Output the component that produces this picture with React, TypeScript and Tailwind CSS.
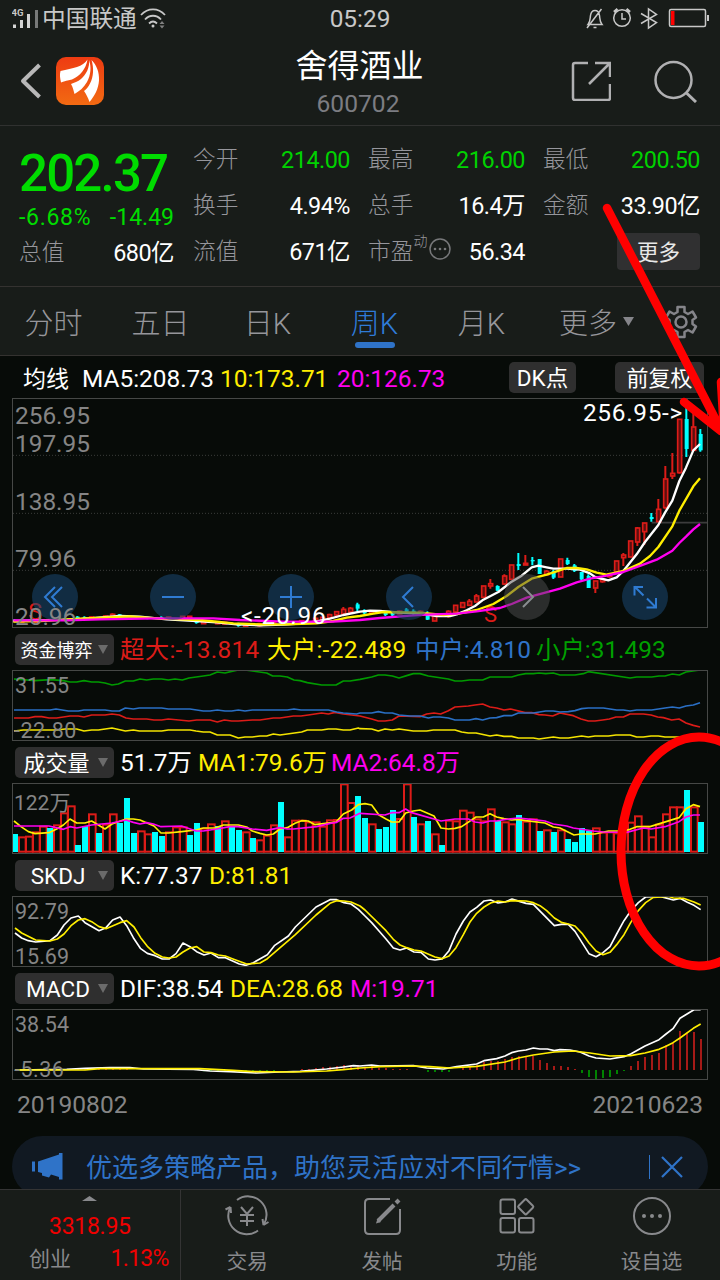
import type { ReactNode } from "react";
import clsx from "clsx";

// Chart geometry is kept in device units (3 per css pixel).
// R() shifts the points of the right half of the screen.
type Pt = [number, number];
const R = (pts: Pt[]): Pt[] => pts.map(([x, y]) => [x + 1080, y]);

const barX = (i: number) => 45 + 21 * i;

const volumes =
    "c612 r620 r618 r605 r588 c594 r584 r548 r527 c645 c588 r551 c609 r582 r551 c579 c504 c609 r602 r611 c606 c618 r605 r590 r590 c615 c579 r594 r581 c588 r572 c590 c600 r605 c624 r629 r615 r584 c516 r620 r570 r570 r575 r575 r588 r569 r568 r461 r517 c498 c564 r581 c597 c591 c540 r565 r461 c561 r581 c573 r611 c645 r570 r572 r540 r546 r566 r572 r536 c573 r575 r581 c555 r573 r566 c603 r599 c606 r599 c627 c636 c594 c602 r593 r606 r605 r608 r600 r576 r557 r588 r620 r582 r551 r530 r530 c480 r530 c576".split(" ");

// [index, color, high, bodyTop, bodyBottom, low]
const candles: [number, "c" | "r", number, number, number, number][] = [
    [0, "c", 790, 793, 797, 798], [1, "r", 792, 794, 799, 800], [3, "r", 792, 794, 799, 800],
    [9, "c", 780, 782, 787, 788], [10, "c", 781, 783, 787, 789], [11, "r", 781, 783, 787, 788],
    [13, "r", 778, 780, 785, 786], [14, "r", 772, 775, 782, 784], [15, "c", 774, 775, 780, 782],
    [19, "c", 782, 784, 788, 790], [21, "c", 780, 783, 789, 790], [22, "r", 781, 783, 789, 790],
    [24, "r", 780, 781, 787, 788], [25, "r", 780, 781, 787, 788], [26, "c", 793, 796, 801, 803],
    [27, "r", 793, 795, 803, 804], [29, "r", 795, 797, 803, 805], [30, "r", 797, 799, 804, 806],
    [32, "c", 800, 804, 810, 812], [33, "r", 802, 806, 811, 812], [35, "r", 800, 803, 809, 812],
    [37, "r", 795, 798, 804, 806], [39, "c", 793, 796, 800, 804], [41, "r", 792, 794, 801, 804],
    [43, "r", 785, 787, 797, 800], [44, "r", 782, 784, 794, 797], [45, "r", 773, 776, 785, 789],
    [46, "r", 765, 767, 777, 782], [47, "r", 753, 760, 774, 777], [48, "r", 753, 757, 768, 770],
    [49, "c", 740, 745, 758, 766], [50, "c", 760, 763, 772, 775], [51, "r", 762, 766, 772, 775],
    [53, "c", 766, 770, 777, 780], [54, "c", 768, 771, 778, 780], [55, "r", 762, 765, 774, 778],
    [56, "c", 756, 760, 767, 772], [57, "c", 760, 764, 770, 776], [58, "r", 763, 766, 774, 780],
    [59, "c", 766, 771, 791, 792], [60, "r", 775, 779, 795, 795], [61, "c", 774, 776, 779, 782],
    [62, "r", 763, 766, 778, 785], [63, "r", 747, 748, 768, 768], [64, "r", 738, 740, 754, 755],
    [65, "r", 729, 736, 748, 750], [66, "r", 714, 720, 738, 738], [67, "r", 690, 690, 724, 725],
    [68, "r", 669, 683, 690, 698], [69, "c", 688, 690, 704, 705], [70, "r", 655, 660, 684, 686],
    [71, "r", 627, 627, 670, 672], [72, "c", 591, 624, 630, 642], [73, "r", 597, 622, 627, 627],
    [74, "c", 603, 612, 616, 628], [75, "c", 609, 609, 654, 654], [76, "r", 642, 646, 656, 660],
    [77, "c", 642, 645, 665, 669], [78, "r", 609, 609, 663, 663], [79, "c", 605, 612, 624, 627],
    [80, "c", 624, 628, 645, 648], [81, "c", 648, 648, 670, 672], [82, "c", 655, 660, 696, 696],
    [83, "r", 675, 675, 696, 711], [84, "r", 666, 670, 677, 680], [85, "r", 650, 654, 662, 665],
    [86, "r", 615, 615, 648, 650], [87, "r", 591, 597, 605, 630], [88, "r", 555, 555, 603, 603],
    [89, "r", 513, 516, 558, 570], [90, "r", 501, 501, 527, 567], [91, "c", 471, 483, 489, 497],
    [92, "r", 429, 460, 497, 497], [93, "r", 330, 369, 455, 460], [94, "r", 291, 352, 360, 369],
    [95, "r", 190, 190, 350, 353], [96, "c", 126, 189, 279, 303], [97, "r", 165, 213, 283, 285],
    [98, "c", 219, 234, 283, 287],
];

const ma5: Pt[] = [
    [40, 795], [230, 790], [360, 780], [420, 782], [500, 790], [590, 795], [650, 799], [710, 805], [780, 808], [850, 806], [900, 803], [950, 796], [990, 788], [1030, 777], [1080, 767],
    ...R([[30, 764], [60, 765], [120, 770], [180, 772], [230, 780], [270, 780], [290, 775], [320, 763], [345, 750], [370, 731], [415, 708], [455, 677], [485, 659], [515, 634], [535, 629], [560, 634], [580, 638], [620, 638], [660, 641], [690, 652], [705, 663], [745, 673], [770, 664], [790, 645], [830, 595], [855, 558], [895, 507], [915, 470], [937, 434], [958, 375], [978, 335], [1000, 283], [1020, 264]]),
];
const ma10: Pt[] = [
    [40, 797], [120, 795], [240, 788], [390, 781], [470, 787], [600, 792], [700, 802], [780, 805], [860, 805], [950, 802], [1000, 795], [1040, 785], [1080, 780],
    ...R([[40, 773], [70, 768], [130, 769], [180, 770], [250, 777], [300, 772], [350, 762], [400, 744], [440, 720], [475, 693], [515, 668], [560, 656], [590, 646], [620, 636], [650, 636], [680, 640], [710, 650], [740, 656], [790, 645], [840, 623], [870, 600], [895, 573], [937, 511], [958, 464], [1000, 391], [1020, 367]]),
];
const ma20: Pt[] = [
    [40, 793], [200, 793], [300, 790], [480, 787], [640, 787], [720, 792], [850, 797], [1000, 797], [1080, 792],
    ...R([[60, 786], [150, 779], [200, 776], [290, 773], [350, 766], [420, 756], [455, 744], [500, 725], [600, 698], [650, 679], [690, 668], [740, 659], [790, 648], [850, 626], [890, 611], [937, 584], [958, 561], [978, 542], [1000, 520], [1020, 504]]),
];

const flowSmall: Pt[] = [
    [42, 147], [105, 152], [150, 149], [190, 152], [210, 156], [230, 156], [252, 152], [275, 156], [295, 156], [315, 159], [336, 165], [355, 162], [376, 153], [400, 153], [420, 147], [440, 150], [460, 147], [485, 147], [505, 150], [525, 147], [547, 150], [567, 144], [610, 138], [630, 135], [652, 126], [675, 129], [695, 124], [715, 120], [735, 120], [800, 129], [818, 138], [840, 138], [862, 141], [882, 150], [900, 152], [922, 158], [965, 165], [1008, 165], [1030, 153], [1050, 153], [1080, 148],
    ...R([[35, 141], [55, 135], [75, 135], [97, 138], [117, 144], [140, 137], [160, 131], [180, 131], [205, 138], [265, 147], [285, 153], [305, 153], [328, 150], [368, 150], [390, 141], [455, 141], [475, 135], [497, 131], [520, 131], [537, 129], [557, 131], [580, 129], [600, 135], [645, 135], [670, 131], [685, 125], [810, 144], [830, 141], [875, 141], [897, 138], [915, 138], [937, 132], [958, 135], [978, 126], [1020, 120]]),
];
const flowMid: Pt[] = [
    [42, 240], [150, 240], [168, 237], [205, 243], [235, 243], [252, 240], [315, 240], [336, 243], [358, 243], [376, 234], [400, 237], [418, 234], [485, 234], [505, 237], [570, 237], [610, 243], [630, 243], [652, 240], [675, 243], [695, 243], [715, 240], [735, 243], [757, 240], [862, 240], [882, 237], [903, 240], [985, 240], [1010, 246], [1030, 249], [1070, 252],
    ...R([[0, 249], [35, 249], [55, 245], [75, 249], [97, 249], [117, 255], [150, 258], [180, 258], [205, 264], [220, 261], [240, 261], [265, 264], [285, 270], [328, 270], [348, 266], [368, 270], [390, 264], [410, 263], [432, 257], [455, 257], [475, 249], [520, 249], [557, 243], [580, 243], [600, 246], [625, 245], [645, 242], [665, 236], [685, 234], [730, 234], [770, 240], [790, 240], [810, 243], [830, 240], [875, 240], [915, 234], [937, 231], [958, 234], [978, 228], [1000, 225], [1020, 218]]),
];
const flowHuge: Pt[] = [
    [42, 264], [85, 264], [105, 260], [125, 260], [147, 264], [170, 264], [210, 258], [235, 258], [252, 261], [275, 255], [315, 255], [336, 252], [358, 255], [378, 264], [400, 267], [440, 267], [462, 270], [485, 270], [505, 267], [567, 273], [590, 270], [630, 270], [652, 276], [673, 270], [695, 273], [715, 273], [757, 270], [780, 270], [820, 264], [840, 264], [880, 258], [903, 258], [925, 255], [965, 249], [985, 252], [1005, 247], [1030, 252], [1080, 258],
    ...R([[35, 267], [55, 273], [75, 273], [97, 270], [117, 258], [180, 260], [200, 252], [222, 249], [242, 252], [265, 242], [285, 231], [325, 228], [345, 225], [368, 222], [390, 231], [410, 234], [432, 240], [452, 237], [495, 248], [515, 248], [537, 254], [555, 255], [578, 258], [600, 249], [640, 257], [663, 267], [685, 273], [705, 273], [728, 270], [748, 267], [768, 261], [790, 261], [810, 252], [850, 252], [873, 255], [893, 261], [910, 263], [935, 270], [957, 267], [978, 279], [1000, 286], [1020, 291]]),
];
const flowBig: Pt[] = [
    [42, 303], [70, 300], [170, 300], [195, 297], [230, 297], [252, 303], [275, 300], [295, 300], [336, 294], [376, 303], [400, 300], [418, 303], [485, 303], [505, 300], [570, 300], [588, 303], [610, 306], [630, 306], [652, 315], [690, 315], [715, 324], [735, 321], [757, 321], [780, 318], [800, 318], [820, 312], [840, 315], [905, 306], [922, 300], [965, 300], [985, 297], [1008, 297], [1030, 300], [1050, 300], [1075, 294],
    ...R([[0, 296], [35, 297], [55, 303], [75, 297], [97, 300], [117, 297], [160, 303], [200, 303], [220, 300], [285, 300], [305, 306], [325, 309], [348, 309], [390, 318], [410, 315], [432, 319], [455, 319], [475, 324], [520, 324], [537, 327], [580, 321], [600, 324], [625, 324], [665, 318], [685, 321], [705, 318], [745, 318], [768, 315], [810, 315], [830, 321], [850, 321], [873, 318], [895, 318], [915, 321], [1020, 321]]),
];

const volMa1: Pt[] = [
    [42, 573], [63, 590], [85, 605], [105, 611], [147, 608], [170, 597], [190, 585], [210, 567], [230, 579], [255, 579], [275, 573], [295, 585], [315, 597], [336, 582], [378, 567], [400, 567], [420, 570], [462, 588], [483, 609], [505, 609], [545, 605], [588, 600], [610, 594], [645, 594], [670, 585], [715, 585], [740, 591], [757, 603], [780, 610], [800, 615], [820, 612], [840, 597], [862, 593], [885, 580], [905, 572], [925, 573], [945, 584], [1008, 576], [1030, 552], [1055, 540], [1075, 524],
    ...R([[15, 521], [35, 525], [57, 555], [78, 567], [95, 576], [117, 576], [137, 549], [160, 543], [180, 540], [222, 558], [243, 594], [265, 597], [285, 595], [305, 590], [348, 561], [370, 561], [390, 551], [410, 561], [432, 566], [455, 570], [475, 568], [497, 572], [555, 579], [580, 591], [600, 594], [642, 615], [663, 612], [705, 612], [745, 603], [790, 603], [810, 598], [830, 590], [870, 590], [957, 563], [978, 536], [1000, 524], [1020, 530]]),
];
const volMa2: Pt[] = [
    [42, 588], [147, 588], [190, 598], [210, 590], [230, 594], [275, 585], [336, 579], [378, 570], [400, 577], [420, 582], [440, 578], [460, 582], [483, 590], [545, 588], [588, 603], [610, 603], [650, 597], [690, 590], [715, 590], [757, 597], [800, 601], [840, 593], [862, 597], [880, 597], [950, 590], [990, 580], [1010, 577], [1030, 565], [1050, 564], [1080, 550],
    ...R([[75, 555], [95, 548], [117, 548], [137, 537], [155, 548], [243, 573], [285, 567], [325, 567], [345, 576], [368, 579], [390, 573], [410, 573], [432, 569], [475, 564], [520, 569], [555, 573], [580, 582], [620, 588], [640, 594], [700, 603], [730, 606], [800, 607], [850, 594], [873, 597], [915, 590], [957, 575], [978, 561], [1000, 555], [1020, 555]]),
];

const kLine: Pt[] = [
    [45, 231], [65, 246], [85, 254], [107, 258], [150, 254], [172, 237], [192, 207], [213, 186], [235, 180], [255, 200], [297, 224], [318, 215], [338, 192], [360, 183], [380, 209], [400, 245], [422, 278], [442, 292], [465, 299], [487, 309], [507, 309], [528, 293], [549, 261], [570, 272], [590, 287], [612, 297], [633, 291], [655, 305], [676, 305], [718, 324], [738, 328], [760, 320], [802, 296], [823, 269], [865, 240], [886, 213], [948, 153], [990, 131], [1010, 131], [1032, 140], [1053, 144], [1075, 160],
    ...R([[15, 180], [35, 200], [57, 225], [78, 249], [100, 276], [120, 282], [140, 276], [162, 288], [183, 289], [205, 309], [225, 312], [246, 309], [267, 284], [288, 234], [310, 195], [330, 168], [350, 154], [372, 135], [392, 132], [414, 141], [435, 138], [456, 129], [478, 136], [498, 142], [520, 145], [583, 209], [604, 205], [625, 205], [645, 226], [687, 293], [708, 302], [729, 290], [750, 272], [770, 234], [792, 194], [812, 165], [835, 140], [857, 123], [900, 121], [940, 132], [960, 127], [982, 139], [1002, 148], [1022, 161]]),
];
const dLine: Pt[] = [
    [45, 216], [65, 231], [107, 252], [150, 255], [172, 249], [192, 234], [213, 209], [235, 192], [255, 188], [275, 197], [297, 212], [318, 218], [360, 200], [380, 194], [402, 213], [422, 245], [442, 271], [465, 292], [487, 303], [507, 306], [528, 303], [549, 288], [570, 276], [590, 272], [612, 288], [633, 290], [655, 297], [676, 300], [697, 308], [740, 324], [780, 321], [802, 308], [886, 236], [948, 177], [990, 142], [1010, 134], [1032, 135], [1053, 138], [1080, 150],
    ...R([[15, 162], [78, 224], [100, 250], [120, 267], [140, 275], [162, 282], [183, 285], [225, 303], [246, 308], [267, 300], [288, 275], [310, 236], [330, 198], [350, 172], [372, 153], [392, 141], [414, 135], [435, 138], [456, 134], [498, 135], [520, 140], [540, 149], [560, 164], [583, 186], [604, 199], [625, 204], [645, 210], [666, 232], [687, 261], [708, 285], [729, 296], [750, 289], [770, 266], [792, 236], [812, 200], [835, 164], [857, 140], [880, 124], [925, 121], [940, 126], [970, 127], [1002, 138], [1022, 147]]),
];

const dif: Pt[] = [
    [45, 642], [200, 640], [255, 637], [330, 635], [390, 635], [430, 639], [580, 640], [630, 645], [690, 647], [770, 651], [840, 648], [900, 646], [980, 639], [1030, 633], [1060, 629],
    ...R([[0, 630], [35, 627], [60, 630], [160, 629], [200, 636], [250, 639], [290, 632], [350, 624], [372, 614], [410, 608], [435, 600], [455, 590], [475, 585], [498, 582], [520, 576], [540, 579], [562, 579], [583, 584], [600, 581], [630, 582], [660, 588], [687, 600], [708, 606], [750, 609], [792, 602], [812, 594], [855, 570], [897, 551], [918, 534], [939, 518], [960, 487], [981, 474], [1002, 461], [1022, 461]]),
];
const dea: Pt[] = [
    [45, 642], [255, 642], [300, 638], [600, 638], [700, 643], [760, 647], [880, 648], [980, 645], [1030, 641], [1080, 636],
    ...R([[60, 632], [160, 630], [210, 632], [270, 636], [350, 631], [435, 618], [475, 606], [520, 597], [583, 588], [640, 585], [690, 591], [750, 600], [812, 599], [855, 591], [897, 580], [918, 571], [939, 560], [960, 546], [1000, 517], [1022, 504]]),
];
// values are bar ends, the zero line sits at 642
const macd: [number, number][] = [
    [8, 639], [9, 639], [10, 638], [11, 639], [12, 638], [13, 638], [14, 635], [15, 636], [16, 639],
    [27, 646], [28, 646], [29, 648], [30, 647], [31, 648], [32, 648], [33, 647], [34, 647], [35, 646], [36, 645], [37, 645],
    [41, 639], [42, 639], [43, 636], [44, 633], [45, 632], [46, 630], [47, 627], [48, 627], [49, 627],
    [50, 632], [51, 630], [52, 635], [53, 636], [54, 639], [55, 639], [56, 639],
    [59, 648], [60, 648], [61, 648], [62, 648],
    [64, 634], [65, 630], [66, 627], [67, 618], [68, 615], [69, 615], [70, 609], [71, 603], [72, 600], [73, 603], [74, 600], [75, 612], [76, 621], [77, 630], [78, 630], [79, 633], [80, 639],
    [81, 651], [82, 663], [83, 669], [84, 666], [85, 663], [86, 654], [87, 645],
    [88, 630], [89, 615], [90, 603], [91, 597], [92, 591], [93, 567], [94, 560], [95, 525], [96, 531], [97, 528], [98, 549],
];

function Line({ pts, color, w = 5 }: { pts: Pt[]; color: string; w?: number }) {
    return <polyline points={pts.map((p) => p.join(",")).join(" ")} fill="none" stroke={color} strokeWidth={w} strokeLinejoin="round" />;
}

function Chart({ top, tall, children, labels }: { top: number; tall?: boolean; children: ReactNode; labels: ReactNode }) {
    return (
        <div className={clsx("relative mx-3", tall ? "h-[230px]" : "h-[71px]")}>
            <svg className="block size-full" viewBox={`36 ${top} 2088 ${tall ? 690 : 213}`}>
                {children}
                <rect x={37.5} y={top + 1.5} width={2085} height={(tall ? 690 : 213) - 3} fill="none" stroke="#464846" strokeWidth={3} />
            </svg>
            {labels}
        </div>
    );
}

function AxisLabel({ className, children }: { className: string; children: ReactNode }) {
    return <span className={clsx("absolute leading-none text-[#858585]", className)}>{children}</span>;
}

function Selector({ name, className, children }: { name: string; className?: string; children: ReactNode }) {
    return (
        <div className="flex h-[42px] items-center pl-[15px] text-[24.4px] leading-none whitespace-nowrap">
            <button className="mr-[6px] flex h-[31px] w-[99px] items-center justify-between rounded-[5px] bg-[#2f2f2f] pr-[6px] text-white">
                <span className={clsx("flex-1 pt-[3px] text-center", className)}>{name}</span>
                <svg className="h-[9px] w-[10px]" viewBox="0 0 10 9">
                    <path d="M0 0h10L5 9z" fill="#6b6b6b" />
                </svg>
            </button>
            <div className="flex pt-[3px]">{children}</div>
        </div>
    );
}

function Stat({ label, value, green }: { label: ReactNode; value: string; green?: boolean }) {
    return (
        <div className="flex h-[46px] items-center justify-between pt-[3px]">
            <span className="text-[22.700px] font-light text-[#96969c]">{label}</span>
            <span className={clsx("text-[23.4px] tracking-[-0.5px]", green ? "text-[#00d200]" : "text-white")}>{value}</span>
        </div>
    );
}

function RoundButton({ gray, children }: { gray?: boolean; children: ReactNode }) {
    return (
        <button className={clsx("size-[46px] rounded-full", gray ? "bg-[#505050]/50" : "bg-[#1a4873]/55")}>
            <svg viewBox="0 0 46 46" fill="none" stroke={gray ? "#8a8d90" : "#2f7bd2"} strokeWidth={2}>
                {children}
            </svg>
        </button>
    );
}

function StatusBar() {
    return (
        <div className="grid h-[38px] grid-cols-3 items-center px-3 text-[#c8c8c8]">
            <div className="flex items-center">
                <svg className="h-[22px] w-[30px]" viewBox="0 0 30 22">
                    <text x="-0.5" y="8" fontSize="9.5" fontWeight="700" fill="#c8c8c8">4G</text>
                    <path d="M1 16.500h3v3.500H1zM8 12h3v8H8zM15 6h3v14h-3z" fill="#d4d4d4" />
                    <path d="M23 2h3v18h-3z" fill="#787a79" />
                </svg>
                <span className="pt-[2px] text-[23.7px] leading-none">中国联通</span>
                <svg className="ml-[3px] h-[22px] w-[27px]" viewBox="0 0 27 22" fill="none" stroke="#c8c8c8" strokeWidth={1.8}>
                    <path d="M1 7c7-7.500 17-7.500 24 0M5 11.500c4.500-5 11.500-5 16 0M9 15.500c2.500-2.500 5.500-2.500 8 0" />
                    <circle cx="13" cy="18" r="1.500" fill="#c8c8c8" stroke="none" />
                    <path d="M19.500 16l2.500-3 2.500 3zM19.500 17.500l2.500 3 2.500-3z" fill="#808080" stroke="none" />
                </svg>
            </div>
            <span className="pt-px text-center text-[24.4px] leading-none">05:29</span>
            <svg className="ml-auto h-[24px] w-[126px] translate-x-px" viewBox="0 0 126 24" fill="none" stroke="#c8c8c8" strokeWidth={1.5}>
                <path d="M5 17.500c2.500-3 2-6 2.500-9C8 5 9.500 3.500 12 3.500S16 5 16.500 8.500c.5 3 0 6 2.500 9zM4 21L18.500 2M10.500 20.500h3" />
                <circle cx="39" cy="11" r="8.300" />
                <path d="M39 6v6h4" />
                <path d="M31 5l3.500-3M43.500 2L47 5" strokeWidth={2.500} />
                <path d="M58 6.500l15.500 9-8 5.500V2l8 5.500-15.500 9" />
                <rect x="86.500" y="2.500" width="36" height="17" rx="1.500" />
                <path d="M125 8v6" strokeWidth={2} />
                <path d="M88 4h3.500v14H88z" fill="#f00" stroke="none" />
            </svg>
        </div>
    );
}

function TitleBar() {
    return (
        <div className="flex h-[87px] items-center px-5 pb-[2px]">
            <svg className="h-[36px] w-[22px]" viewBox="0 0 22 36" fill="none" stroke="#b8b8b8" strokeWidth={4}>
                <path d="M19.500 2L3 18l16.500 16" strokeLinejoin="round" />
            </svg>
            <svg className="ml-[14px] size-[48px]" viewBox="0 0 48 48">
                <defs>
                    <linearGradient id="logo" x1="0" y1="0" x2="0" y2="1">
                        <stop offset="0" stopColor="#ee3b12" />
                        <stop offset="1" stopColor="#f26a12" />
                    </linearGradient>
                </defs>
                <rect width="48" height="48" rx="10" fill="url(#logo)" />
                <g fill="#fff">
                    <path d="M31.500 2.500C27 10 17 11 4.500 14c-1 3.500-.5 7 .5 11.500 6-2 8-2.500 11-3C24 19 30 12 31.500 2.500z" />
                    <path d="M33 3c1 7-3 15-8 19-3 2.500-7 3.500-10 5 2 3.500 2.500 6.500 3.500 10 4.500-2.500 9.500-6.500 12.500-12 4-7.500 4.500-15 2-22z" />
                    <path d="M35.500 3c2.500 8 2 17-1.500 23.500-1.500 3-3.500 5.500-6 7.500 2 3 4 6.500 5.500 11 5-6 9-13 9.500-21.500C43.500 15 40.500 8 35.500 3z" />
                </g>
            </svg>
            <div className="flex flex-1 flex-col items-center pl-[41px] leading-none">
                <h1 className="mt-[3px] text-[32px] leading-[38px] translate-x-[1.500px] text-white">舍得酒业</h1>
                <p className="mt-[5px] text-[24.600px] leading-[28px] text-[#7c7d82]">600702</p>
            </div>
            <svg className="h-[40px] w-[40px]" viewBox="0 0 40 40" fill="none" stroke="#b0b0b2" strokeWidth={2.500}>
                <path d="M17 2H4Q2 2 2 4v33q0 2 2 2h33q2 0 2-2V23M24 2h15v14M39 2L18 23" />
            </svg>
            <svg className="mr-[3px] ml-[42px] h-[44px] w-[44px]" viewBox="0 0 44 44" fill="none" stroke="#b0b0b2" strokeWidth={2.500}>
                <circle cx="20.500" cy="21" r="18" />
                <path d="M33.500 34L43 43" strokeWidth={3} />
            </svg>
        </div>
    );
}

function Quote() {
    return (
        <section className="flex h-[161px] gap-5 border-t border-[#303130] pt-[11px] pl-[19px] leading-none">
            <div className="w-[155px] text-[#00dc00]">
                <div className="flex h-[69px] items-center pt-[4px] text-[51px] font-medium tracking-[-1.800px]">202.37</div>
                <div className="flex h-[23px] items-center justify-between text-[23px]">
                    <span className="tracking-[0.700px]">-6.68%</span>
                    <span>-14.49</span>
                </div>
                <Stat label="总值" value="680亿" />
            </div>
            <div className="-mt-px -ml-px w-[157px]">
                <Stat label="今开" value="214.00" green />
                <Stat label="换手" value="4.94%" />
                <Stat label="流值" value="671亿" />
            </div>
            <div className="-mt-px -ml-[2px] w-[157px]">
                <Stat label="最高" value="216.00" green />
                <Stat label="总手" value="16.4万" />
                <Stat
                    label={
                        <span className="flex items-center">
                            市盈
                            <sup className="-top-[11px] text-[14px]">动</sup>
                            <svg className="ml-[2px] size-[22px] -translate-y-[3px]" viewBox="0 0 22 22" fill="#77787a">
                                <circle cx="11" cy="11" r="10" fill="none" stroke="#77787a" strokeWidth={1.500} />
                                <circle cx="6" cy="11" r="1.300" />
                                <circle cx="11" cy="11" r="1.300" />
                                <circle cx="16" cy="11" r="1.300" />
                            </svg>
                        </span>
                    }
                    value="56.34"
                />
            </div>
            <div className="-mt-px -ml-[2px] w-[157px]">
                <Stat label="最低" value="200.50" green />
                <Stat label="金额" value="33.90亿" />
                <button className="mt-[5px] ml-auto flex h-[37px] w-[83px] items-center justify-center rounded-[4px] bg-[#303031] pt-[2px] text-[21.500px] text-[#e8e8e8]">更多</button>
            </div>
        </section>
    );
}

const tabs = ["分时", "五日", "日K", "周K", "月K"];

function Tabs() {
    return (
        <nav className="flex h-[69px] border-t border-[#343230] text-[29px] leading-none font-light text-[#96969b]">
            {tabs.map((t) => (
                <div key={t} className={clsx("flex w-[107px] flex-col items-center pt-[23px]", t === "周K" && "text-[#2f7bd8]")}>
                    {t}
                    {t === "周K" && <span className="mt-[3px] h-[6px] w-[40px] rounded-full bg-[#2f73c8]" />}
                </div>
            ))}
            <div className="flex flex-1 pt-[23px] pl-[24px]">
                更多
                <svg className="mt-[7px] ml-[6px] h-[9px] w-[11px]" viewBox="0 0 11 9">
                    <path d="M0 0h11L5.500 9z" fill="#85858a" />
                </svg>
                <svg className="-mt-[5px] ml-[30px] size-[34px]" viewBox="0 0 34 34" fill="none" stroke="#85858a" strokeWidth={2.500}>
                    <path d="M13.500 2h7v5l3.500 2 4.500-2.500 3.500 6-3.500 2.500v4l3.500 2.500-3.500 6-4.500-2.500-3.500 2v5h-7v-5l-3.500-2-4.500 2.500-3.500-6L5.500 19v-4L2 12.500l3.500-6L10 9l3.500-2z" strokeLinejoin="round" />
                    <circle cx="17" cy="17" r="5.500" />
                </svg>
            </div>
        </nav>
    );
}

function KLineChart() {
    return (
        <Chart
            top={126}
            tall
            labels={
                <>
                    <div className="absolute top-[176px] left-[20px] flex gap-[72px]">
                        <RoundButton><path d="M23 13L13 23l10 10M30 13L20 23l10 10" /></RoundButton>
                        <RoundButton><path d="M12 23h22" /></RoundButton>
                        <RoundButton><path d="M12 23h22M23 12v22" /></RoundButton>
                        <RoundButton><path d="M27 13L17 23l10 10" /></RoundButton>
                        <RoundButton gray><path d="M19 13l10 10-10 10" /></RoundButton>
                        <RoundButton><path d="M21 13h-8.500v8.500M12.500 12.500l9 9M34 24v9.500h-9.500M34 33.500l-9-9" /></RoundButton>
                    </div>
                    <AxisLabel className="top-[6px] left-[3px] text-[24.400px]">256.95</AxisLabel>
                    <AxisLabel className="top-[34px] left-[3px] text-[24.400px]">197.95</AxisLabel>
                    <AxisLabel className="top-[92px] left-[3px] text-[24.400px]">138.95</AxisLabel>
                    <AxisLabel className="top-[149px] left-[3px] text-[24.400px]">79.96</AxisLabel>
                    <AxisLabel className="top-[207px] left-[3px] text-[24.400px]">20.96</AxisLabel>
                    <span className="absolute top-[206px] left-[229px] text-[24.400px] leading-none tracking-[0.700px] text-white">&lt;-20.96</span>
                    <span className="absolute top-[3px] right-[25px] text-[24.400px] leading-none tracking-[0.700px] text-white">256.95-&gt;</span>
                </>
            }
        >
            {[298, 472, 643].map((y) => (
                <path key={y} d={`M39 ${y}H2121`} stroke="#3a3d3a" strokeWidth={3} strokeDasharray="3 6" />
            ))}
            <path d="M1955 500H2121" stroke="#3c3c3c" strokeWidth={5} />
            {candles.map(([i, c, high, top, bottom, low]) => {
                const x = barX(i);
                const color = c === "c" ? "#00ffff" : "#dc1c18";
                return (
                    <g key={i}>
                        <path d={`M${x - 2} ${high}V${c === "r" ? top : low}M${x - 2} ${bottom}V${low}`} stroke={color} strokeWidth={6} />
                        <rect x={x - 7} y={top} width={12} height={bottom - top} fill={c === "c" ? color : "#5c0f0e"} stroke={color} strokeWidth={c === "c" ? 0 : 5} />
                    </g>
                );
            })}
            <text x="85" y="791" fontSize="70" fill="#dc1c18">S</text>
            <text x="1452" y="797" fontSize="66" fill="#dc1c18">S</text>
            <Line pts={ma5} color="#fff" w={7} />
            <Line pts={ma10} color="#ffee00" w={7} />
            <Line pts={ma20} color="#ff00f0" w={7} />
        </Chart>
    );
}

function Charts() {
    return (
        <section className="h-[781px] bg-[#070b08]">
            <div className="flex h-[43px] items-center border-t border-[#343230] pl-[23px] text-[24.400px] leading-none whitespace-nowrap">
                <span className="w-[59px] pt-[4px] text-[23px] text-white">均线</span>
                <span className="w-[138px] pt-[4px] text-white">MA5:208.73</span>
                <span className="w-[117px] pt-[4px] text-[#ffee00]">10:173.71</span>
                <span className="pt-[4px] text-[#ff00f0]">20:126.73</span>
                <button className="mr-[39px] ml-auto h-[31px] w-[67px] rounded-[5px] bg-[#2f2f2f] pt-[3px] text-[22.500px] text-white">DK点</button>
                <button className="mr-[16px] h-[31px] w-[89px] rounded-[5px] bg-[#2f2f2f] pt-[3px] text-[22px] text-white">前复权</button>
            </div>
            <KLineChart />

            <Selector name="资金博弈" className="text-[18px]">
                <span className="w-[147px] tracking-[0.300px] text-[#dc1c18]">超大:-13.814</span>
                <span className="w-[148px] tracking-[0.300px] text-[#ffee00]">大户:-22.489</span>
                <span className="w-[121px] text-[#2f73c8]">中户:4.810</span>
                <span className="text-[#00a000]">小户:31.493</span>
            </Selector>
            <Chart
                top={120}
                labels={
                    <>
                        <AxisLabel className="top-[5px] left-[3px] text-[21.500px]">31.55</AxisLabel>
                        <AxisLabel className="top-[50px] left-[2px] text-[21.500px] tracking-[0.500px]">-22.80</AxisLabel>
                    </>
                }
            >
                <Line pts={flowSmall} color="#009a00" />
                <Line pts={flowHuge} color="#dc1c18" />
                <Line pts={flowMid} color="#2a6fc4" />
                <Line pts={flowBig} color="#f4e400" />
            </Chart>

            <Selector name="成交量" className="text-[22px]">
                <span className="w-[78px] text-white">51.7万</span>
                <span className="w-[133px] text-[#ffee00]">MA1:79.6万</span>
                <span className="text-[#ff00f0]">MA2:64.8万</span>
            </Selector>
            <Chart top={459} labels={<AxisLabel className="top-[10px] left-[2px] text-[21px]">122万</AxisLabel>}>
                {volumes.map((v, i) => {
                    const y = Number(v.slice(1));
                    return v[0] === "c" ? (
                        <rect key={i} x={barX(i) - 9} y={y} width={18} height={666 - y} fill="#00ffff" />
                    ) : (
                        <rect key={i} x={barX(i) - 9} y={y + 2} width={20} height={663 - y} fill="none" stroke="#dc1c18" strokeWidth={6} />
                    );
                })}
                <Line pts={volMa1} color="#ffee00" />
                <Line pts={volMa2} color="#ff00f0" />
            </Chart>

            <Selector name="SKDJ" className="pl-[3px] text-[22.500px]">
                <span className="w-[89px] text-white">K:77.37</span>
                <span className="text-[#ffee00]">D:81.81</span>
            </Selector>
            <Chart
                top={120}
                labels={
                    <>
                        <AxisLabel className="top-[5px] left-[3px] text-[21.500px]">92.79</AxisLabel>
                        <AxisLabel className="top-[50px] left-[3px] text-[21.500px]">15.69</AxisLabel>
                    </>
                }
            >
                <Line pts={kLine} color="#fff" />
                <Line pts={dLine} color="#ffee00" />
            </Chart>

            <Selector name="MACD" className="pl-[3px] text-[22.500px]">
                <span className="w-[110px] text-white">DIF:38.54</span>
                <span className="w-[120px] text-[#ffee00]">DEA:28.68</span>
                <span className="text-[#ff00f0]">M:19.71</span>
            </Selector>
            <Chart
                top={459}
                labels={
                    <>
                        <AxisLabel className="top-[5px] left-[3px] text-[21.500px]">38.54</AxisLabel>
                        <AxisLabel className="top-[50px] left-[2px] text-[21.500px] tracking-[0.500px]">-5.36</AxisLabel>
                    </>
                }
            >
                {macd.map(([i, v]) => (
                    <path key={i} d={`M${barX(i)} 642V${v}`} stroke={v < 642 ? "#a51a17" : "#008200"} strokeWidth={6} />
                ))}
                <Line pts={dif} color="#fff" />
                <Line pts={dea} color="#ffee00" />
            </Chart>
            <div className="flex h-[50px] items-center justify-between px-[17px] text-[24.600px] text-[#858585]">
                <span>20190802</span>
                <span>20210623</span>
            </div>
        </section>
    );
}

function Banner() {
    return (
        <div className="h-[53px] overflow-hidden bg-[#070b08] px-3">
            <div className="flex h-[61px] items-center rounded-full bg-[#111922] pr-[25px] pl-[20px] text-[#2f73c8]">
                <svg className="h-[27px] w-[31px]" viewBox="0 0 31 27" fill="#2f73c8">
                    <path d="M0 8.500h3v10H0zM6 8.500L27 1.500V0h3.500v26.500H27V24l-8-2.500-2 3-7-2V20l-4-1z" />
                </svg>
                <span className="ml-[23px] pt-[2px] text-[26px] leading-none whitespace-nowrap">优选多策略产品，助您灵活应对不同行情&gt;&gt;</span>
                <span className="mr-[11px] ml-auto h-[24px] w-px bg-[#2f73c8]" />
                <svg className="size-[22px]" viewBox="0 0 22 22" stroke="#2f73c8" strokeWidth={2.200}>
                    <path d="M1 1l20 20M21 1L1 21" />
                </svg>
            </div>
        </div>
    );
}

function FooterItem({ label, children }: { label: string; children: ReactNode }) {
    return (
        <div className="flex w-[135px] flex-col items-center pt-[4px] pr-[2px]">
            <svg className="size-[44px]" viewBox="0 0 44 44" fill="none" stroke="#88898c" strokeWidth={2}>
                {children}
            </svg>
            <span className="mt-[14px] text-[20.500px] leading-none">{label}</span>
        </div>
    );
}

function Footer() {
    return (
        <footer className="flex h-[91px] border-t border-[#343434] text-[#88898c]">
            <div className="flex w-[181px] flex-col items-center border-r border-[#343434] leading-none">
                <svg className="mt-[6px] h-[5px] w-[15px]" viewBox="0 0 15 5">
                    <path d="M0 5l7.500-5L15 5z" fill="#88898c" />
                </svg>
                <span className="mt-[14px] text-[23px] tracking-[-0.300px] text-[#f00000]">3318.95</span>
                <div className="mt-[9px] flex w-full items-center justify-between pr-[11px] pl-[29px]">
                    <span className="pt-px text-[21px]">创业</span>
                    <span className="text-[23px] tracking-[-0.700px] text-[#f00000]">1.13%</span>
                </div>
            </div>
            <FooterItem label="交易">
                <path d="M12 6a18.500 18.500 0 0 1 26.500 25M38.500 31l-1-6M38.500 31l5-3M33 36.500A18.500 18.500 0 0 1 5.500 13M5.500 13L.5 15.500M5.500 13l.500 6" />
                <path d="M16 13l6 7 6-7M15 21h14M15 27h14M22 20v12" />
            </FooterItem>
            <FooterItem label="发帖">
                <path d="M30 5H9Q5 5 5 9v27q0 4 4 4h27q4 0 4-4V15" />
                <path d="M18 27L34 11" strokeWidth={4} />
                <path d="M36 9l3-3" strokeWidth={4} />
                <path d="M16 29.500l1.500-5 3.500 3.500z" fill="#88898c" stroke="none" />
            </FooterItem>
            <FooterItem label="功能">
                <rect x="5.500" y="5.500" width="14.500" height="14.500" rx="2" />
                <rect x="5.500" y="24" width="14.500" height="14.500" rx="2" />
                <rect x="24" y="24" width="14.500" height="14.500" rx="2" />
                <rect x="25" y="7" width="11.500" height="11.500" rx="1.500" transform="rotate(45 30.750 12.750)" />
            </FooterItem>
            <FooterItem label="设自选">
                <circle cx="22" cy="22" r="18" />
                <g fill="#88898c" stroke="none">
                    <circle cx="14" cy="22" r="2" />
                    <circle cx="22" cy="22" r="2" />
                    <circle cx="30" cy="22" r="2" />
                </g>
            </FooterItem>
        </footer>
    );
}

export default function App() {
    return (
        <div className="relative h-[1280px] w-[720px] overflow-hidden bg-[#181c19] font-['Roboto','Noto_Sans_CJK_SC',sans-serif]">
            <StatusBar />
            <TitleBar />
            <Quote />
            <Tabs />
            <Charts />
            <Banner />
            <Footer />
            {/* hand-drawn marks over the charts */}
            <svg className="pointer-events-none absolute inset-0" width="720" height="1280" fill="none" stroke="#f00" strokeWidth={8.500} strokeLinecap="round">
                <path d="M607 208L722 432L684 402M721 382L724 432" />
                <ellipse cx="699" cy="851.500" rx="78" ry="114.500" strokeWidth={9} />
            </svg>
        </div>
    );
}
